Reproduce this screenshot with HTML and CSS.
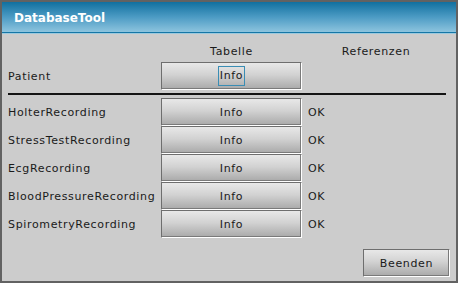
FILE: index.html
```html
<!DOCTYPE html>
<html>
<head>
<meta charset="utf-8">
<link rel="stylesheet" href="styles.css">
</head>
<body>
<div class="window">
  <div class="titlebar">DatabaseTool</div>
  <div class="content">
    <div class="grid head">
      <div></div>
      <div class="colhead">Tabelle</div>
      <div class="colhead">Referenzen</div>
    </div>
    <div class="grid">
      <div class="label">Patient</div>
      <button class="btn"><span class="focus">Info</span></button>
      <div></div>
    </div>
    <div class="sep"></div>
    <div class="grid rows">
      <div class="label">HolterRecording</div>
      <button class="btn">Info</button>
      <div class="status">OK</div>
      <div class="label">StressTestRecording</div>
      <button class="btn">Info</button>
      <div class="status">OK</div>
      <div class="label">EcgRecording</div>
      <button class="btn">Info</button>
      <div class="status">OK</div>
      <div class="label">BloodPressureRecording</div>
      <button class="btn">Info</button>
      <div class="status">OK</div>
      <div class="label">SpirometryRecording</div>
      <button class="btn">Info</button>
      <div class="status">OK</div>
    </div>
    <div class="footer">
      <button class="btn end">Beenden</button>
    </div>
  </div>
</div>
</body>
</html>
```

FILE: styles.css
```css
* { box-sizing: border-box; }
html, body { margin: 0; padding: 0; }
body {
  width: 458px;
  height: 283px;
  font-family: "DejaVu Sans", sans-serif;
  font-size: 11px;
  letter-spacing: 0.65px;
  color: #1a1a1a;
  background: #cccccc;
}
.window {
  width: 458px;
  height: 283px;
  border: 2px solid #626262;
  background: #cccccc;
  display: flex;
  flex-direction: column;
}
.titlebar {
  height: 31px;
  padding-left: 12px;
  padding-top: 1px;
  display: flex;
  align-items: center;
  color: #ffffff;
  font-weight: bold;
  font-size: 12px;
  letter-spacing: 0;
  background: linear-gradient(to bottom, #11709f 0%, #4c9bc4 50%, #8dc4de 100%);
  border-bottom: 1px solid #1576a6;
  box-shadow: 0 1px 0 #9cc9dd;
}
.content {
  flex: 1;
  padding: 4px 6px 0 6px;
  display: flex;
  flex-direction: column;
}
.grid {
  display: grid;
  grid-template-columns: 153px 141px 1fr;
  align-items: center;
}
.head { height: 25px; }
.colhead { text-align: center; padding-top: 3px; }
.label { padding-left: 0; }
.sep {
  height: 2px;
  background: #141414;
  margin: 3px 4px 3px 0;
}
.btn {
  height: 28px;
  width: 141px;
  font-family: "DejaVu Sans", sans-serif;
  font-size: 11px;
  letter-spacing: 0.65px;
  color: #1a1a1a;
  padding: 0;
  border-style: solid;
  border-width: 1px;
  border-color: #6e6e6e #ffffff #ffffff #6e6e6e;
  box-shadow: inset -1px -1px 0 #7a7a7a;
  background: linear-gradient(to bottom, #e8e8e8 0%, #d2d2d2 45%, #a9a9a9 100%);
  display: flex;
  align-items: center;
  justify-content: center;
}
.focus {
  border: 1px solid #3a8db4;
  padding: 3px 1px;
  line-height: 12px;
}
.status { padding-left: 6px; }
.footer {
  display: flex;
  justify-content: flex-end;
  margin-top: 11px;
}
.btn.end { width: 87px; }
```
